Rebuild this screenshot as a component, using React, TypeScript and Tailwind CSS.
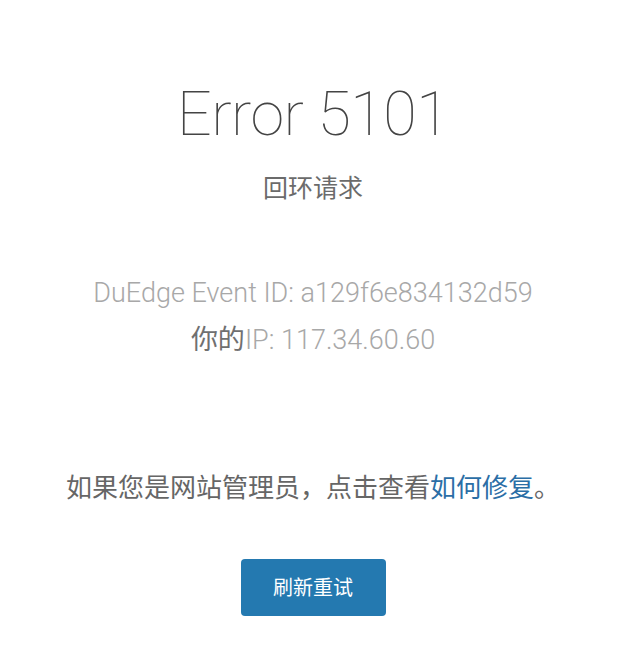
import React from "react";

export default function App() {
  return (
    <div className="w-[626px] h-[658px] bg-white flex flex-col items-center text-center" style={{ fontFamily: 'Roboto, "Noto Sans CJK SC", sans-serif' }}>
      <h1 className="mt-[76px] text-[61px] leading-[76px] font-thin text-[#444444] tracking-[-0.5px]">Error 5101</h1>
      <div className="mt-[20px] text-[25px] leading-[34px] text-[#6b6b6b]">回环请求</div>
      <div className="mt-[70px] text-[27px] leading-[34px] font-light text-[#a8a8a8]">DuEdge Event ID: a129f6e834132d59</div>
      <div className="mt-[13px] text-[27px] leading-[34px] font-light text-[#a8a8a8]">
        <span className="text-[#707070] font-normal">你的</span>IP: 117.34.60.60
      </div>
      <div className="mt-[114px] text-[26px] leading-[34px] text-[#666666]">
        如果您是网站管理员，点击查看<a className="text-[#2b6ea6]">如何修复</a>。
      </div>
      <button className="mt-[54px] w-[145px] h-[57px] rounded-[4px] bg-[#2479b0] text-white text-[20px]">刷新重试</button>
    </div>
  );
}
